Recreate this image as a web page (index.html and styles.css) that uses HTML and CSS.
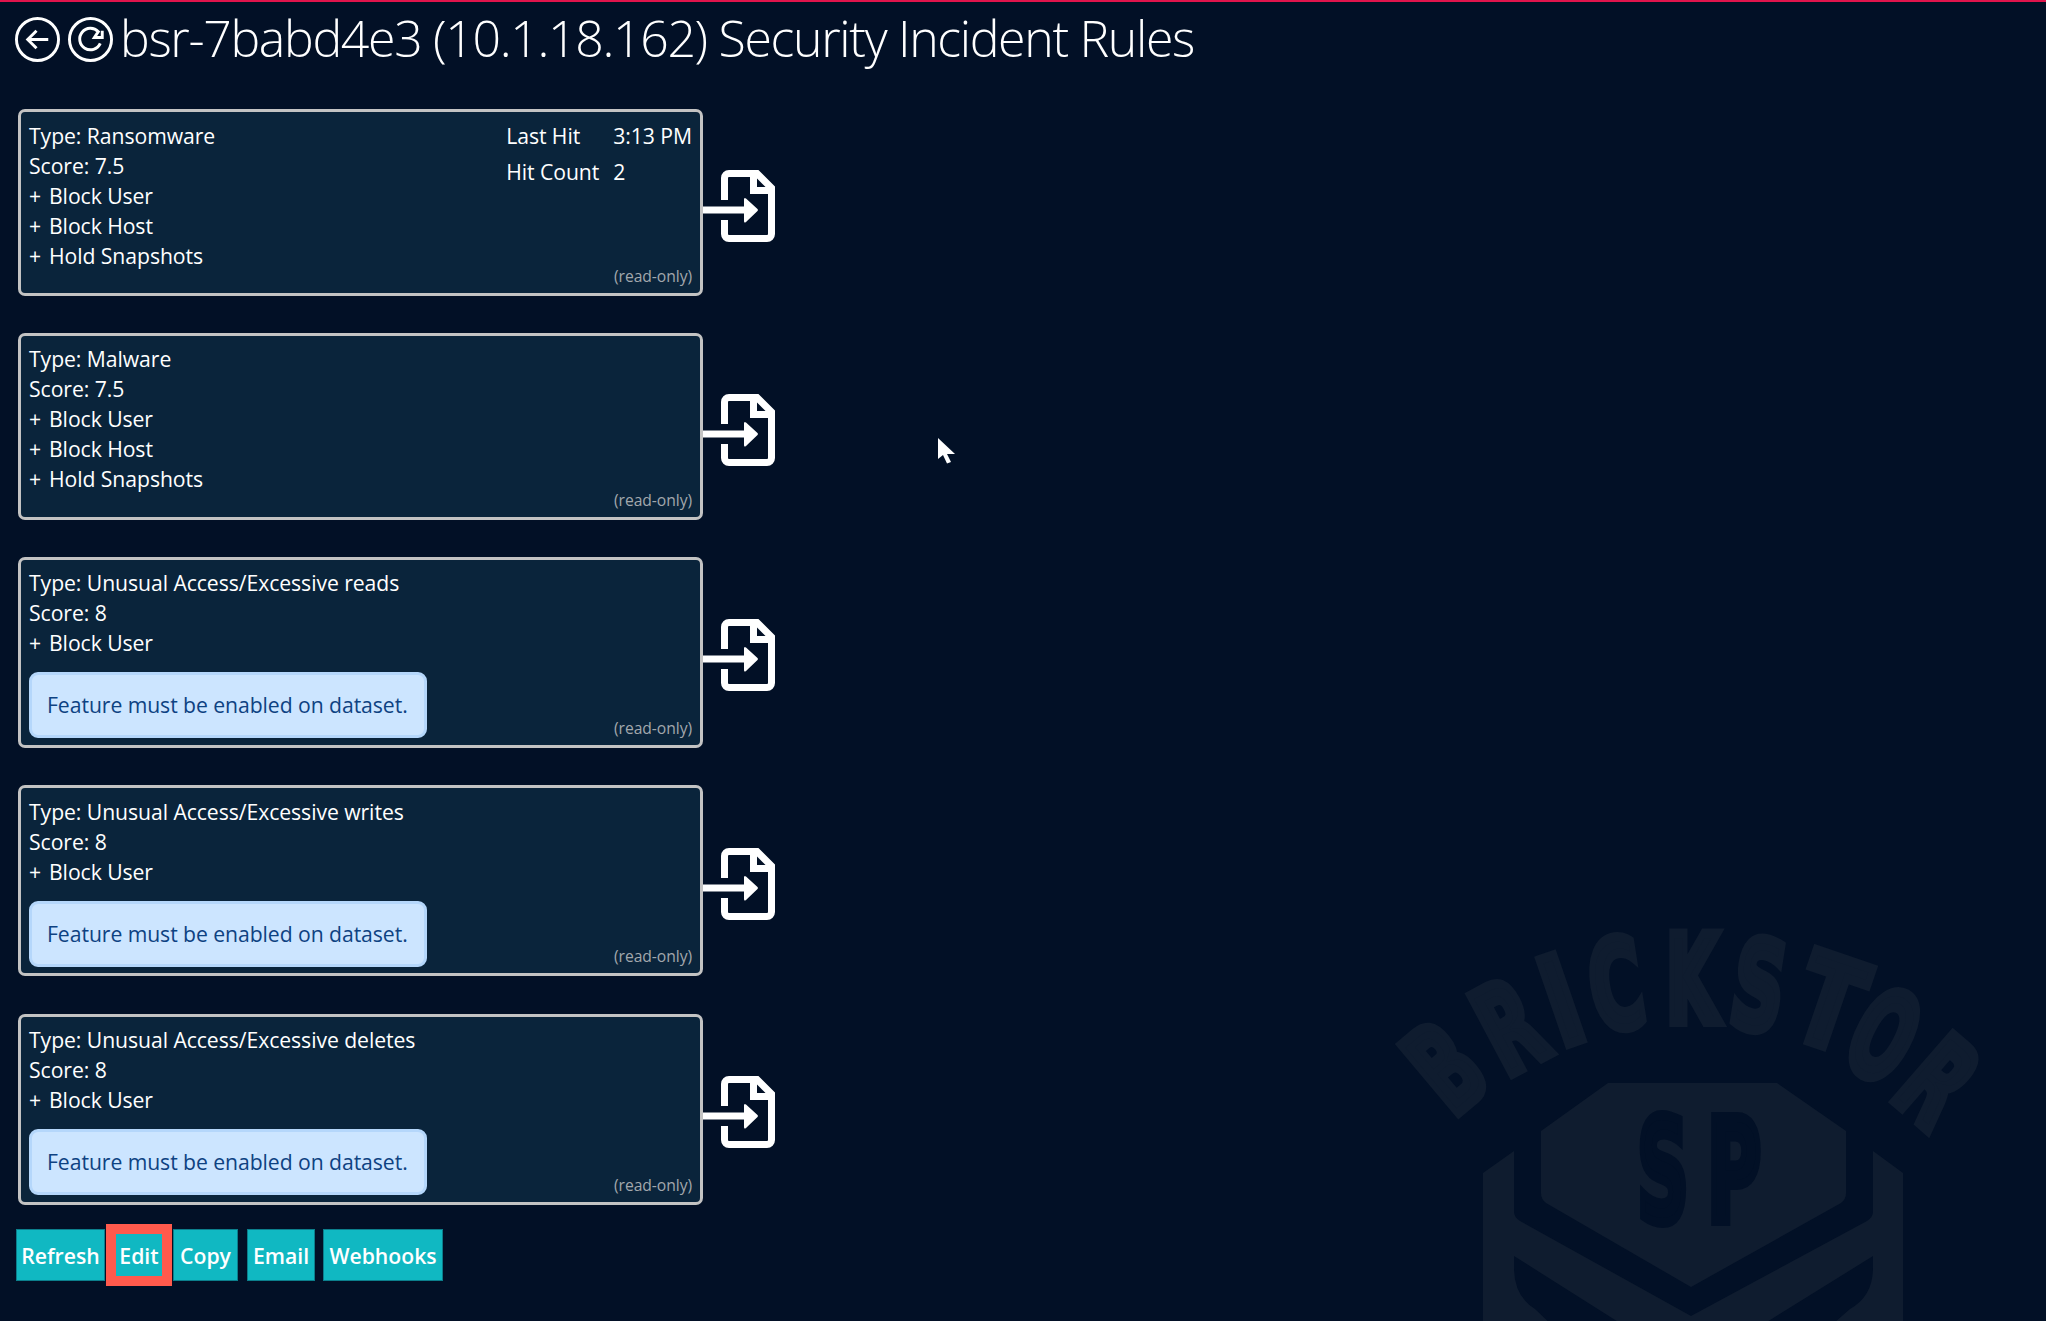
FILE: index.html
```html
<!DOCTYPE html>
<html lang="en">
<head>
<meta charset="utf-8">
<title>Security Incident Rules</title>
<link rel="stylesheet" href="styles.css">
</head>
<body>
<svg class="watermark" viewBox="0 0 686 421" width="686" height="421" aria-hidden="true">
  <g class="wm-letters" transform="translate(-1360 -900)">
    <text transform="translate(1445 1067) rotate(-40) scale(.72 1.22)" y="36">B</text>
    <text transform="translate(1509 1026) rotate(-28) scale(.72 1.22)" y="36">R</text>
    <text transform="translate(1561 1000) rotate(-19) scale(.85 1.22)" y="36">I</text>
    <text transform="translate(1616 984) rotate(-9) scale(.72 1.22)" y="36">C</text>
    <text transform="translate(1692 978) scale(.68 1.22)" y="36">K</text>
    <text transform="translate(1759 985) rotate(9) scale(.72 1.22)" y="36">S</text>
    <text transform="translate(1830 1002) rotate(19) scale(.9 1.22)" y="36">T</text>
    <text transform="translate(1884 1035) rotate(28) scale(.68 1.22)" y="36">O</text>
    <text transform="translate(1938 1081) rotate(41) scale(.72 1.22)" y="36">R</text>
  </g>
  <g transform="translate(-1360 -900)">
    <path class="wm-fill" d="M1608 1083H1777L1846 1131V1193Q1846 1199 1841 1203L1691 1287L1546 1203Q1541 1199 1541 1193V1131Z"/>
    <path class="wm-fill" d="M1483 1173L1514 1151V1212Q1514 1217 1520 1221L1691 1316L1867 1221Q1873 1217 1873 1212V1151L1903 1173V1330H1483Z"/>
    <path class="wm-cut" d="M1514 1256L1631 1330H1754L1873 1256V1268Q1873 1296 1850 1309L1826 1330H1557L1535 1309Q1514 1296 1514 1268Z"/>
    <text class="wm-sp" transform="translate(1663 1221) scale(.72 1.42)">S</text>
    <text class="wm-sp" transform="translate(1734 1221) scale(.74 1.42)">P</text>
  </g>
</svg>

<header class="title-bar">
  <svg class="round-icon" viewBox="0 0 46 46" width="45" height="45" aria-hidden="true">
    <circle cx="23" cy="23" r="21.5"/>
    <path d="M34 23H14M22 14L13 23L22 32"/>
  </svg>
  <svg class="round-icon" viewBox="0 0 46 46" width="45" height="45" aria-hidden="true">
    <circle cx="23" cy="23" r="21.5"/>
    <path d="M33 27A11 11 0 1 1 31 15L27 21H35V14"/>
  </svg>
  <h1 class="title">bsr-7babd4e3 (10.1.18.162) Security Incident Rules</h1>
</header>

<main class="rules">
  <div class="rule">
    <section class="card">
      <div class="card-top">
        <div>
          <div>Type: Ransomware</div>
          <div>Score: 7.5</div>
          <div><span class="plus">+</span> Block User</div>
          <div><span class="plus">+</span> Block Host</div>
          <div><span class="plus">+</span> Hold Snapshots</div>
        </div>
        <table class="hits">
          <tr><td>Last Hit</td><td>3:13 PM</td></tr>
          <tr><td>Hit Count</td><td>2</td></tr>
        </table>
      </div>
      <span class="readonly">(read-only)</span>
    </section>
    <svg class="export" viewBox="0 0 75 75" width="75" height="75" aria-hidden="true"><path class="doc" d="M21.5 30V8A4.5 4.5 0 0 1 26 3.5H54L68.500 18V64A4.500 4.500 0 0 1 64 68.500H26A4.500 4.500 0 0 1 21.500 64V50"/><path class="doc" d="M50.500 3.500V20.500H68.500"/><path class="arrow" d="M0 36.500H41V29.500Q41 27 43 28.500L54.500 39Q55.500 40 54.500 41L43 52Q41 53.500 41 51V43.500H0Z"/></svg>
  </div>

  <div class="rule">
    <section class="card">
      <div class="card-top">
        <div>
          <div>Type: Malware</div>
          <div>Score: 7.5</div>
          <div><span class="plus">+</span> Block User</div>
          <div><span class="plus">+</span> Block Host</div>
          <div><span class="plus">+</span> Hold Snapshots</div>
        </div>
      </div>
      <span class="readonly">(read-only)</span>
    </section>
    <svg class="export" viewBox="0 0 75 75" width="75" height="75" aria-hidden="true"><path class="doc" d="M21.5 30V8A4.5 4.5 0 0 1 26 3.5H54L68.500 18V64A4.500 4.500 0 0 1 64 68.500H26A4.500 4.500 0 0 1 21.500 64V50"/><path class="doc" d="M50.500 3.500V20.500H68.500"/><path class="arrow" d="M0 36.500H41V29.500Q41 27 43 28.500L54.500 39Q55.500 40 54.500 41L43 52Q41 53.500 41 51V43.500H0Z"/></svg>
  </div>

  <div class="rule rule-notice">
    <section class="card">
      <div>Type: Unusual Access/Excessive reads</div>
      <div>Score: 8</div>
      <div><span class="plus">+</span> Block User</div>
      <div class="notice">Feature must be enabled on dataset.</div>
      <span class="readonly">(read-only)</span>
    </section>
    <svg class="export" viewBox="0 0 75 75" width="75" height="75" aria-hidden="true"><path class="doc" d="M21.5 30V8A4.5 4.5 0 0 1 26 3.5H54L68.500 18V64A4.500 4.500 0 0 1 64 68.500H26A4.500 4.500 0 0 1 21.500 64V50"/><path class="doc" d="M50.500 3.500V20.500H68.500"/><path class="arrow" d="M0 36.500H41V29.500Q41 27 43 28.500L54.500 39Q55.500 40 54.500 41L43 52Q41 53.500 41 51V43.500H0Z"/></svg>
  </div>

  <div class="rule rule-notice">
    <section class="card">
      <div>Type: Unusual Access/Excessive writes</div>
      <div>Score: 8</div>
      <div><span class="plus">+</span> Block User</div>
      <div class="notice">Feature must be enabled on dataset.</div>
      <span class="readonly">(read-only)</span>
    </section>
    <svg class="export" viewBox="0 0 75 75" width="75" height="75" aria-hidden="true"><path class="doc" d="M21.5 30V8A4.5 4.5 0 0 1 26 3.5H54L68.500 18V64A4.500 4.500 0 0 1 64 68.500H26A4.500 4.500 0 0 1 21.500 64V50"/><path class="doc" d="M50.500 3.500V20.500H68.500"/><path class="arrow" d="M0 36.500H41V29.500Q41 27 43 28.500L54.500 39Q55.500 40 54.500 41L43 52Q41 53.500 41 51V43.500H0Z"/></svg>
  </div>

  <div class="rule rule-notice">
    <section class="card">
      <div>Type: Unusual Access/Excessive deletes</div>
      <div>Score: 8</div>
      <div><span class="plus">+</span> Block User</div>
      <div class="notice">Feature must be enabled on dataset.</div>
      <span class="readonly">(read-only)</span>
    </section>
    <svg class="export" viewBox="0 0 75 75" width="75" height="75" aria-hidden="true"><path class="doc" d="M21.5 30V8A4.5 4.5 0 0 1 26 3.5H54L68.500 18V64A4.500 4.500 0 0 1 64 68.500H26A4.500 4.500 0 0 1 21.500 64V50"/><path class="doc" d="M50.500 3.500V20.500H68.500"/><path class="arrow" d="M0 36.500H41V29.500Q41 27 43 28.500L54.500 39Q55.500 40 54.500 41L43 52Q41 53.500 41 51V43.500H0Z"/></svg>
  </div>
</main>

<nav class="actions">
  <button class="btn btn-refresh">Refresh</button>
  <button class="btn btn-edit">Edit</button>
  <button class="btn btn-copy">Copy</button>
  <button class="btn btn-email">Email</button>
  <button class="btn btn-webhooks">Webhooks</button>
</nav>

<svg class="cursor" viewBox="0 0 18 26" width="18" height="26" aria-hidden="true"><path d="M0 0V21L5 17L9 25.500L13 24L9 16H17Z"/></svg>
</body>
</html>
```

FILE: styles.css
```css
* { box-sizing: border-box; }

html, body { margin: 0; height: 100%; }

body {
  position: relative;
  height: 1321px;
  overflow: hidden;
  background: #021026;
  border-top: 2px solid #e0144c;
  color: #fff;
  font-family: "Open Sans", "Noto Sans", sans-serif;
  font-size: 21.2px;
  letter-spacing: -0.07px;
  line-height: 30px;
}

.watermark {
  position: absolute;
  left: 1360px;
  top: 898px;
  z-index: 0;
}
.wm-letters text {
  font-family: "DejaVu Sans", sans-serif;
  font-weight: 700;
  font-size: 100px;
  text-anchor: middle;
  fill: #0f1c2f;
  stroke: #0f1c2f;
  stroke-width: 8px;
}
.wm-fill { fill: #0f1c2f; }
.wm-cut { fill: #021026; }
.wm-sp {
  font-family: "DejaVu Sans", sans-serif;
  font-weight: 700;
  font-size: 100px;
  text-anchor: middle;
  fill: #021026;
  stroke: #021026;
  stroke-width: 7px;
}

.title-bar {
  position: relative;
  display: flex;
  align-items: center;
  gap: 8px;
  height: 78px;
  padding: 0 0 4px 15px;
}
.round-icon { flex: none; fill: none; stroke: #fff; stroke-width: 3; }
.title {
  margin: -2px 0 0 -1px;
  font-size: 50px;
  line-height: 60px;
  letter-spacing: -1.34px;
  font-weight: 300;
  white-space: nowrap;
}

.rules {
  position: relative;
  padding: 29px 0 0 18px;
}
.rule {
  display: flex;
  align-items: flex-start;
  margin-bottom: 36.75px;
}
.rule-notice { margin-bottom: 37.5px; }
.rule:last-child { margin-bottom: 0; }

.card {
  position: relative;
  flex: none;
  width: 685px;
  padding: 8.5px 8px 22.5px;
  background: #0a243b;
  border: 3px solid #c3c3c3;
  border-radius: 7px;
}
.plus { margin-right: 2.5px; }
.card-top {
  display: flex;
  justify-content: space-between;
  align-items: flex-start;
}
.hits {
  border-collapse: collapse;
  line-height: 30px;
}
.hits td { padding: 0 0 6px; }
.hits td:first-child { padding-right: 14px; }

.notice {
  width: 398px;
  height: 66px;
  margin: 14px 0 -16px;
  padding: 0 15px;
  display: flex;
  align-items: center;
  white-space: nowrap;
  background: #cce5ff;
  border: 3px solid #b5d7fb;
  border-radius: 9px;
  color: #0e4282;
}
.readonly {
  position: absolute;
  right: 8px;
  bottom: 4px;
  color: #a2a8ad;
  font-size: 15.7px;
  line-height: 26px;
}

.export { flex: none; margin-top: 61px; }
.rule-notice .export { margin-top: 62.5px; }
.doc { fill: none; stroke: #fff; stroke-width: 7; }
.arrow { fill: #fff; }

.actions {
  position: relative;
  display: flex;
  align-items: center;
  height: 62px;
  margin-top: 19.5px;
  padding-left: 16px;
}
.btn {
  height: 52px;
  padding: 1px 0 0;
  background: #10b8c2;
  border: 1px solid #0b7f8c;
  color: #fff;
  font: 600 21.2px/30px "Open Sans", "Noto Sans", sans-serif;
}
.btn-refresh { width: 89px; }
.btn-edit {
  width: 66px;
  height: 62px;
  margin-left: 1px;
  border: 10px solid #ff5a4c;
}
.btn-copy { width: 65px; margin-left: 1px; }
.btn-email { width: 68px; margin-left: 9px; }
.btn-webhooks { width: 120px; margin-left: 8px; }

.cursor {
  position: absolute;
  left: 938px;
  top: 436px;
  z-index: 2;
}
.cursor path { fill: #fff; }
```
